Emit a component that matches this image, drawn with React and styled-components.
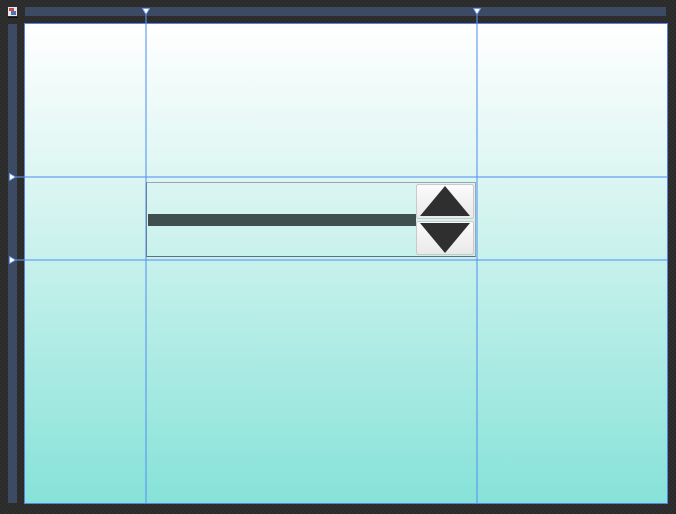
import styled, { createGlobalStyle } from "styled-components";

const GlobalStyle = createGlobalStyle`
  html, body {
    margin: 0;
    padding: 0;
    height: 100%;
    font-family: "Liberation Sans", Arial, sans-serif;
  }
  body {
    background-color: #2b2b2b;
    background-image: repeating-conic-gradient(#2a2a2a 0% 25%, #2f2f2f 0% 50%);
    background-size: 4px 4px;
  }
`;

const COLS = "120px 2px 329px 2px 1fr";
const ROWS = "152px 2px 81px 2px 1fr";
const GUIDE = "rgba(90, 150, 240, 0.55)";

const Frame = styled.div`
  display: grid;
  grid-template-columns: 9px 7px 644px;
  grid-template-rows: 9px 7px 481px;
  padding: 7px 0 0 8px;
`;

const DocIcon = styled.div`
  grid-column: 1;
  grid-row: 1 / 3;
  display: flex;
  flex-direction: column;
  align-items: center;
  gap: 1px;

  &::after {
    content: "";
    width: 10px;
    height: 1px;
    background: #111;
  }
`;

const TopRuler = styled.div`
  grid-column: 3;
  grid-row: 1;
  margin: 0 2px 0 1px;
  background: #3d4a63;
  display: grid;
  grid-template-columns: ${COLS};
`;

const LeftRuler = styled.div`
  grid-column: 1;
  grid-row: 3;
  margin: 1px 0;
  background: #3d4a63;
  display: grid;
  grid-template-rows: ${ROWS};
`;

const Marker = styled.div`
  position: relative;
  display: flex;
  justify-content: center;
  align-items: center;

  svg {
    flex: none;
  }

  &::after {
    content: "";
    position: absolute;
    background: ${GUIDE};
    ${({ $dir }) =>
      $dir === "down"
        ? "left: 0; width: 2px; top: 8px; height: 8px;"
        : "top: 0; height: 2px; left: 8px; width: 8px;"}
  }
`;

const Canvas = styled.div`
  grid-column: 3;
  grid-row: 3;
  border: 1px solid #5a82e2;
  background: linear-gradient(#ffffff 0%, #d9f5f1 35%, #86e2d8 100%);
  display: grid;
  grid-template-columns: ${COLS};
  grid-template-rows: ${ROWS};
`;

const VGuide = styled.div`
  grid-column: ${({ $col }) => $col};
  grid-row: 1 / -1;
  background: ${GUIDE};
`;

const HGuide = styled.div`
  grid-row: ${({ $row }) => $row};
  grid-column: 1 / -1;
  background: ${GUIDE};
`;

const Spinner = styled.div`
  grid-column: 3;
  grid-row: 3;
  align-self: start;
  margin: 4px 0 0 -1px;
  height: 73px;
  display: flex;
  align-items: center;
  border: 1px solid #9ba6b3;
  border-left-color: #6b7d9c;
  border-bottom-color: #5f6f86;
  padding: 0 1px 0 1px;
`;

const Track = styled.div`
  flex: 1;
  height: 12px;
  background: #3f4f4e;
`;

const Buttons = styled.div`
  align-self: stretch;
  width: 58px;
  display: flex;
  flex-direction: column;
  gap: 2px;
  padding: 1px 0;
`;

const SpinButton = styled.div`
  flex: ${({ $grow }) => $grow};
  border: 1px solid #c9c9c9;
  border-radius: 2px;
  background: linear-gradient(#fbfbfb, #e9e9e9);
  display: flex;
  justify-content: center;
  align-items: center;
`;

const Arrow = ({ up }) => (
  <svg width="50" height="30" viewBox="0 0 50 30">
    <polygon
      points={up ? "25,0 50,30 0,30" : "0,0 50,0 25,30"}
      fill="#2f2f2f"
    />
  </svg>
);

const DownMark = () => (
  <svg width="8" height="7" viewBox="0 0 8 7">
    <polygon points="0.5,0.5 7.5,0.5 4,6.5" fill="#fff" stroke="#6f9df0" />
  </svg>
);

const RightMark = () => (
  <svg width="7" height="8" viewBox="0 0 7 8">
    <polygon points="0.5,0.5 6.5,4 0.5,7.5" fill="#fff" stroke="#6f9df0" />
  </svg>
);

export default function App() {
  return (
    <>
      <GlobalStyle />
      <Frame>
        <DocIcon>
          <svg width="9" height="9" viewBox="0 0 9 9">
            <rect x="0" y="0" width="9" height="9" fill="#e8e8e8" />
            <rect x="1" y="1" width="5" height="3" fill="#c74a4a" />
            <rect x="3" y="4" width="5" height="4" fill="#4a76b8" />
          </svg>
        </DocIcon>
        <TopRuler>
          <span />
          <Marker $dir="down"><DownMark /></Marker>
          <span />
          <Marker $dir="down"><DownMark /></Marker>
        </TopRuler>
        <LeftRuler>
          <span />
          <Marker $dir="right"><RightMark /></Marker>
          <span />
          <Marker $dir="right"><RightMark /></Marker>
        </LeftRuler>
        <Canvas>
          <VGuide $col={2} />
          <VGuide $col={4} />
          <HGuide $row={2} />
          <HGuide $row={4} />
          <Spinner>
            <Track />
            <Buttons>
              <SpinButton $grow={35}><Arrow up /></SpinButton>
              <SpinButton $grow={34}><Arrow /></SpinButton>
            </Buttons>
          </Spinner>
        </Canvas>
      </Frame>
    </>
  );
}
